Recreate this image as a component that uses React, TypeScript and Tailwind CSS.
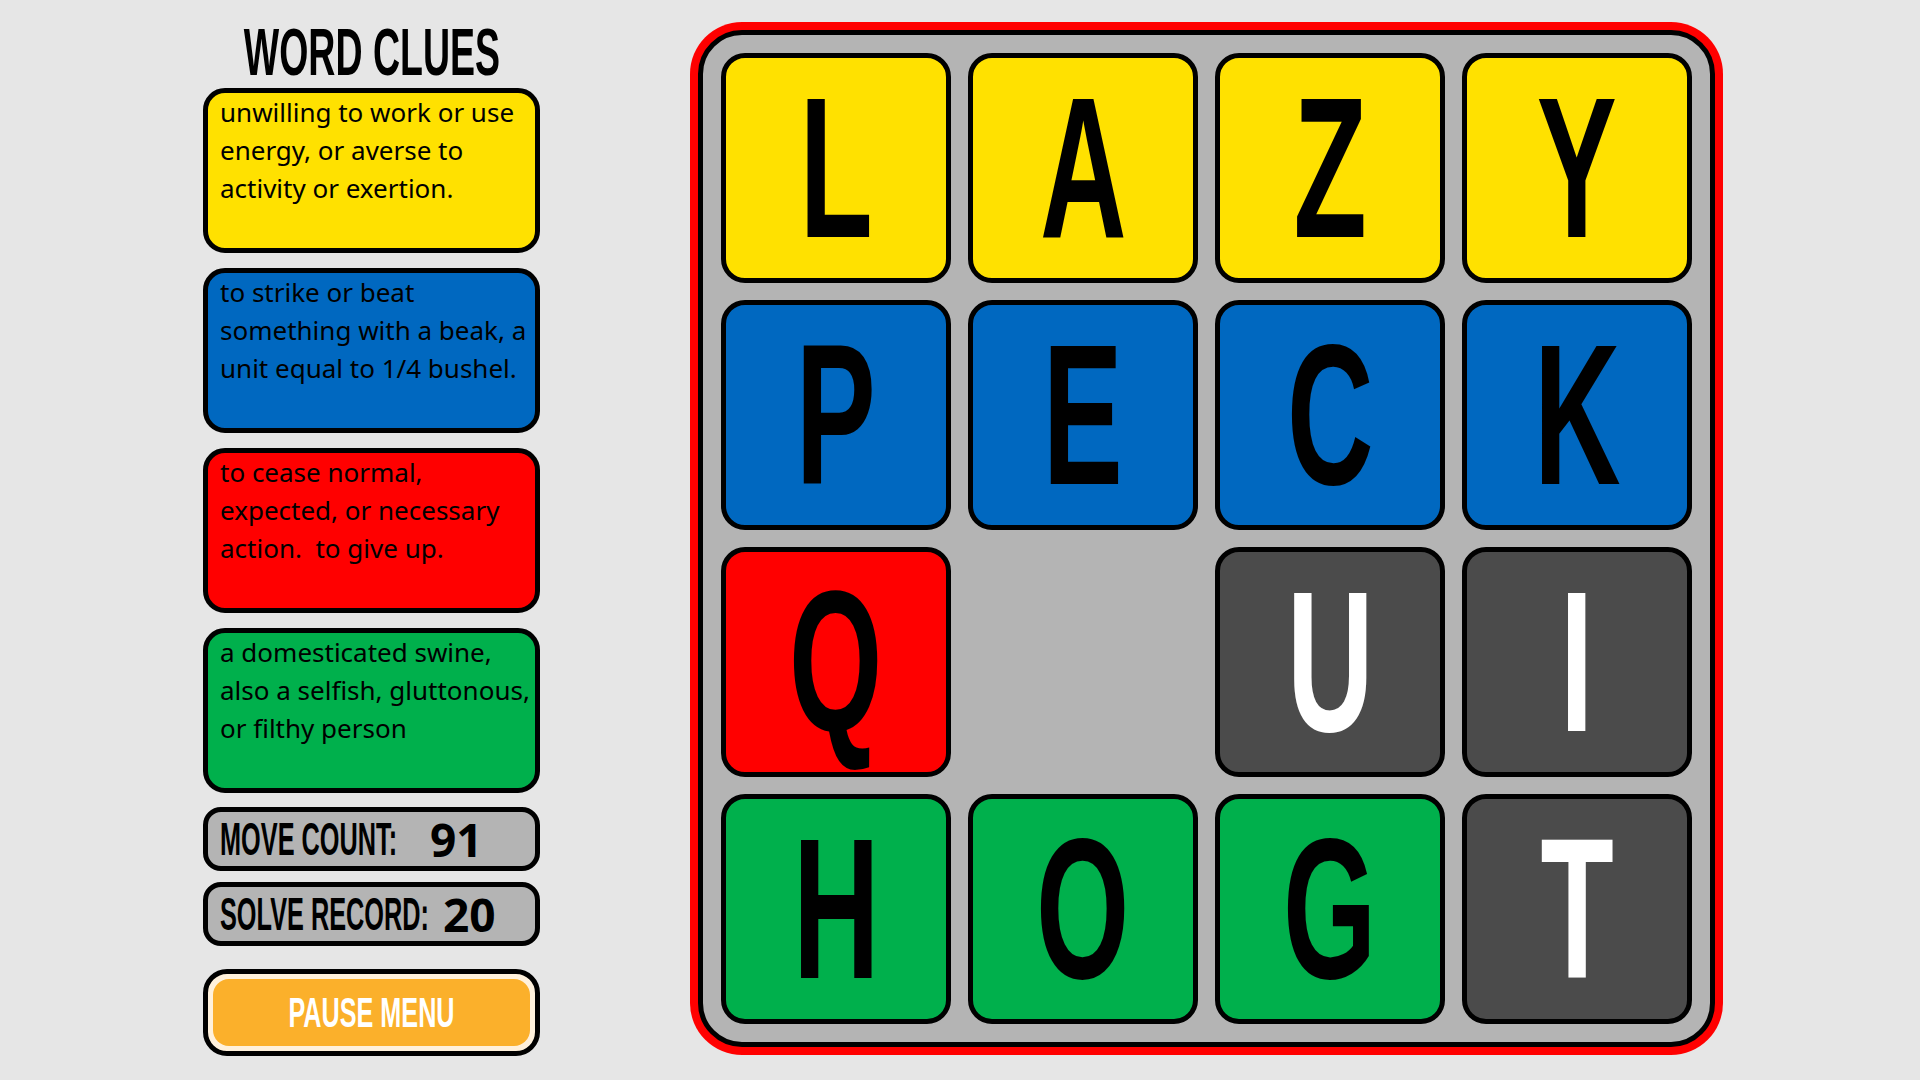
const CLUES = [
  {
    color: "bg-[#FFE100]",
    lines: ["unwilling to work or use", "energy, or averse to", "activity or exertion."],
  },
  {
    color: "bg-[#0068C0]",
    lines: ["to strike or beat", "something with a beak, a", "unit equal to 1/4 bushel."],
  },
  {
    color: "bg-[#FF0000]",
    lines: ["to cease normal,", "expected, or necessary", "action.  to give up."],
  },
  {
    color: "bg-[#00B04C]",
    lines: ["a domesticated swine,", "also a selfish, gluttonous,", "or filthy person"],
  },
];

type Tile = { letter: string; color: string; text: string } | null;

const YELLOW = "bg-[#FFE100]";
const BLUE = "bg-[#0068C0]";
const RED = "bg-[#FF0000]";
const GREEN = "bg-[#00B04C]";
const DARK = "bg-[#4B4B4B]";

const BOARD: Tile[] = [
  { letter: "L", color: YELLOW, text: "text-black" },
  { letter: "A", color: YELLOW, text: "text-black" },
  { letter: "Z", color: YELLOW, text: "text-black" },
  { letter: "Y", color: YELLOW, text: "text-black" },
  { letter: "P", color: BLUE, text: "text-black" },
  { letter: "E", color: BLUE, text: "text-black" },
  { letter: "C", color: BLUE, text: "text-black" },
  { letter: "K", color: BLUE, text: "text-black" },
  { letter: "Q", color: RED, text: "text-black" },
  null,
  { letter: "U", color: DARK, text: "text-white" },
  { letter: "I", color: DARK, text: "text-white" },
  { letter: "H", color: GREEN, text: "text-black" },
  { letter: "O", color: GREEN, text: "text-black" },
  { letter: "G", color: GREEN, text: "text-black" },
  { letter: "T", color: DARK, text: "text-white" },
];

const display = "font-['Liberation_Sans',Arial,sans-serif] font-bold";

function StatBox({ label, value, labelWidth }: { label: string; value: string; labelWidth: string }) {
  return (
    <div className="flex h-[64px] items-center rounded-[18px] border-[5px] border-black bg-[#B4B4B4] pl-[12px]">
      <div className={`${labelWidth} shrink-0`}>
        <span
          className={`${display} inline-block origin-left scale-x-[0.55] whitespace-nowrap text-[46px] leading-none text-black`}
        >
          {label}
        </span>
      </div>
      <span className="font-['Noto_Sans',sans-serif] text-[46px] font-bold leading-none text-black">
        {value}
      </span>
    </div>
  );
}

export default function App() {
  return (
    <div className="flex h-[1080px] w-[1920px] gap-[150px] overflow-hidden bg-[#E6E6E6] pl-[203px]">
      {/* Clue column */}
      <div className="flex w-[337px] flex-col pt-[18px]">
        <div className="flex h-[67px] justify-center">
          <span
            className={`${display} inline-block scale-x-[0.56] whitespace-nowrap text-[67px] leading-[67px] text-black`}
          >
            WORD CLUES
          </span>
        </div>

        <div className="mt-[3px] flex flex-col gap-[15px]">
          {CLUES.map((clue, i) => (
            <div
              key={i}
              className={`h-[165px] rounded-[22px] border-[5px] border-black ${clue.color} px-[12px] font-['Noto_Sans',sans-serif] text-[26px] leading-[38px] text-black`}
            >
              {clue.lines.map((line) => (
                <div key={line} className="whitespace-pre">
                  {line}
                </div>
              ))}
            </div>
          ))}
        </div>

        <div className="mt-[14px]">
          <StatBox label="MOVE COUNT:" value="91" labelWidth="w-[210px]" />
        </div>
        <div className="mt-[11px]">
          <StatBox label="SOLVE RECORD:" value="20" labelWidth="w-[223px]" />
        </div>

        <div className="mt-[23px] flex h-[87px] rounded-[24px] border-[5px] border-black bg-[#FFF1DC] p-[5px]">
          <div className="flex flex-1 items-center justify-center rounded-[16px] bg-[#FBB02B]">
            <span
              className={`${display} inline-block scale-x-[0.6] whitespace-nowrap text-[42px] leading-none text-white`}
            >
              PAUSE MENU
            </span>
          </div>
        </div>
      </div>

      {/* Board */}
      <div className="pt-[22px]">
        <div className="rounded-[52px] bg-[#FF0000] p-[8px]">
          <div className="grid grid-cols-4 gap-[17px] rounded-[44px] border-[5px] border-black bg-[#B4B4B4] p-[18px]">
            {BOARD.map((tile, i) =>
              tile ? (
                <div
                  key={i}
                  className={`flex h-[230px] w-[230px] items-center justify-center rounded-[24px] border-[5px] border-black ${tile.color}`}
                >
                  <span
                    className={`${display} inline-block scale-x-[0.6] text-[200px] leading-[200px] ${tile.text}`}
                  >
                    {tile.letter}
                  </span>
                </div>
              ) : (
                <div key={i} className="h-[230px] w-[230px]" />
              ),
            )}
          </div>
        </div>
      </div>
    </div>
  );
}
